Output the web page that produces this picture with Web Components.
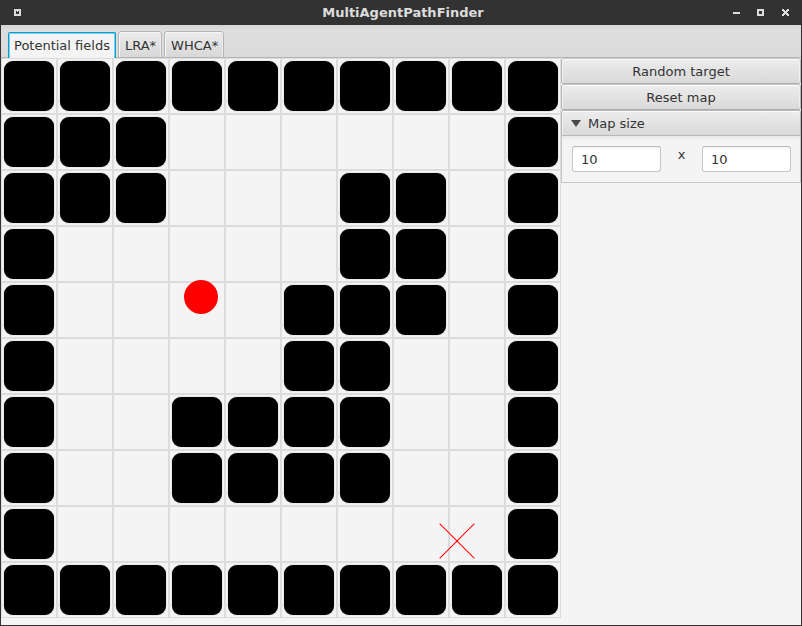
<!DOCTYPE html>
<html lang="en">
<head>
<meta charset="utf-8">
<title>MultiAgentPathFinder</title>
<style>
html, body { margin: 0; min-height: 100%; }
body { background: #f4f4f4; color: #333; font: 13px/16px "DejaVu Sans", sans-serif; }
</style>
</head>
<body>
<app-window heading="MultiAgentPathFinder">
  <tab-bar slot="tabs">
    <tab-item selected>Potential fields</tab-item>
    <tab-item>LRA*</tab-item>
    <tab-item>WHCA*</tab-item>
  </tab-bar>
  <map-board></map-board>
  <side-panel>
    <push-button>Random target</push-button>
    <push-button>Reset map</push-button>
    <titled-pane heading="Map size">
      <size-field label="Map width" value="10"></size-field>
      <span>x</span>
      <size-field label="Map height" value="10"></size-field>
    </titled-pane>
  </side-panel>
</app-window>
<script>
function define(name, render, ready) {
  customElements.define(name, class extends HTMLElement {
    connectedCallback() {
      if (this.shadowRoot) return;
      this.attachShadow({ mode: 'open' }).innerHTML = '<style>*{box-sizing:border-box}</style>' + render(this);
      if (ready) ready(this);
    }
  });
}

define('app-window', el => `
<style>
:host { display: flex; flex-direction: column; box-sizing: border-box; min-height: 100vh; border: 1px solid #323232; border-top: 0; }
header { display: grid; grid-template-columns: 68px 1fr 64px; align-items: center; height: 25px; background: #323232; color: #dcdcdc; }
h1 { margin: 0; font-size: 13px; line-height: 25px; text-align: center; font-weight: bold; }
nav { display: flex; justify-content: flex-end; gap: 10px; padding-right: 8px; }
nav.menu { justify-content: flex-start; padding-left: 9px; }
button { display: flex; align-items: center; justify-content: center; width: 15px; height: 25px; padding: 0; border: 0; background: none; }
svg { display: block; width: 15px; height: 15px; fill: #dcdcdc; shape-rendering: crispEdges; }
main { display: flex; align-items: flex-start; }
</style>
<header>
  <nav class="menu"><button aria-label="Window menu"><svg viewBox="0 0 15 15"><path fill-rule="evenodd" d="M4 4h7v7H4zM6 6v3h3V6zM7 6h1v1H7z"/></svg></button></nav>
  <h1>${el.getAttribute('heading')}</h1>
  <nav>
    <button aria-label="Minimize"><svg viewBox="0 0 15 15"><path d="M5 7h7v2H5z"/></svg></button>
    <button aria-label="Maximize"><svg viewBox="0 0 15 15"><path fill-rule="evenodd" d="M4 4h7v7H4zM6 6v3h3V6z"/></svg></button>
    <button aria-label="Close"><svg viewBox="0 0 15 15"><path d="M4 4h2v1h1v1h1V5h1V4h2v2h-1v1H9v1h1v1h1v2H9v-1H8V9H7v1H6v1H4V9h1V8h1V7H5V6H4z"/></svg></button>
  </nav>
</header>
<slot name="tabs"></slot>
<main><slot></slot></main>`);

define('tab-bar', () => `
<style>
:host { display: block; }
div { display: flex; align-items: flex-end; gap: 2px; height: 33px; padding-left: 7px;
  background: linear-gradient(#b5b5b5, #b5b5b5) bottom / 100% 1px no-repeat, linear-gradient(#d6d6d6, #dedede 6px, #dadada); }
</style>
<div role="tablist"><slot></slot></div>`);

define('tab-item', el => `
<style>
:host { display: block; }
button { display: block; height: 27px; padding: 4px 5px 1px 6px; border: 1px solid #b5b5b5; border-radius: 3px 3px 0 0;
  background: linear-gradient(#ebebeb, #d8d8d8); box-shadow: inset 1px 1px 0 #f6f6f6, inset -1px 0 0 #ececec; color: #333; font: inherit; white-space: nowrap; }
button[aria-selected="true"] { height: 26px; padding: 2px 5px; border-color: #039ed3; border-bottom: 0; background: #f4f4f4; box-shadow: inset 1px 1px 0 #7fcfe9, inset -1px 0 0 #7fcfe9; border-radius: 2px 2px 0 0; }
</style>
<button role="tab" aria-selected="${el.hasAttribute('selected')}"><slot></slot></button>`);

define('map-board', () => `
<style>
:host { display: block; position: relative; flex: none; }
.grid { display: grid; grid-template-columns: repeat(10, 56px); grid-auto-rows: 56px; }
.grid > div { padding: 2px; border: 1px solid #dcdcdc; }
.wall::before { content: ""; display: block; height: 50px; border-radius: 9px; background: #000; box-shadow: 0 0 1px #888; }
svg { position: absolute; inset: 0; width: 100%; height: 100%; }
</style>
<div class="grid" role="img" aria-label="Map"></div>
<svg viewBox="0 0 560 560" aria-hidden="true">
  <circle cx="200" cy="239" r="17" fill="#f00"/>
  <path fill="#f00" d="M439 465.3L473.7 500L473 500.7L438.3 466z"/>
  <path fill="#f00" d="M473 465.3L473.7 466L439 500.7L438.3 500z"/>
</svg>`, el => {
  const rows = ['##########', '###......#', '###...##.#', '#.....##.#', '#....###.#',
    '#....##..#', '#..####..#', '#..####..#', '#........#', '##########'];
  const grid = el.shadowRoot.querySelector('.grid');
  for (const c of rows.join('')) {
    const cell = document.createElement('div');
    if (c === '#') cell.className = 'wall';
    grid.append(cell);
  }
});

define('side-panel', () => `
<style>:host { display: flex; flex-direction: column; flex: 1; min-width: 0; }</style><slot></slot>`);

define('push-button', () => `
<style>
:host { display: block; }
button { display: block; width: 100%; height: 26px; padding: 2px 0 0; border: 1px solid #bababa; border-top-color: #c6c6c6; border-bottom-color: #adadad; border-radius: 3px;
  background: linear-gradient(#ededed, #d9d9d9); box-shadow: inset 0 1px 0 #fbfbfb, inset 1px 0 0 #f0f0f0, inset -1px 0 0 #f0f0f0; color: #333; font: inherit; }
</style>
<button><slot></slot></button>`);

define('titled-pane', el => `
<style>
:host { display: block; }
button { display: flex; align-items: center; gap: 7px; width: 100%; height: 26px; padding: 1px 9px 0; border: 1px solid #b9b9b9; border-radius: 2px 2px 0 0;
  background: linear-gradient(#ededed, #d9d9d9); box-shadow: inset 0 1px 0 #fbfbfb, inset 1px 0 0 #f0f0f0; color: #333; font: inherit; }
svg { width: 10px; height: 7px; fill: #4a4a4a; }
section { display: grid; grid-template-columns: 1fr 41px 1fr; height: 47px; padding: 10px 9px 10px 10px; border: 1px solid #c6c6c6; border-top: 0;
  background: linear-gradient(#e9e9e9, #f4f4f4 5px); text-align: center; line-height: 18px; }
</style>
<button aria-expanded="true"><svg viewBox="0 0 10 7"><path d="M0 0h10L5 7z"/></svg>${el.getAttribute('heading')}</button>
<section><slot></slot></section>`);

define('size-field', el => `
<style>
:host { display: block; min-width: 0; }
input { display: block; width: 100%; height: 26px; padding: 1px 8px 0; border: 1px solid #c6c6c6; border-top-color: #b9b9b9; border-radius: 3px;
  background: linear-gradient(#f3f3f3, #fff 3px); color: #333; font: inherit; }
</style>
<input type="text" aria-label="${el.getAttribute('label')}" value="${el.getAttribute('value')}">`);
</script>
</body>
</html>
